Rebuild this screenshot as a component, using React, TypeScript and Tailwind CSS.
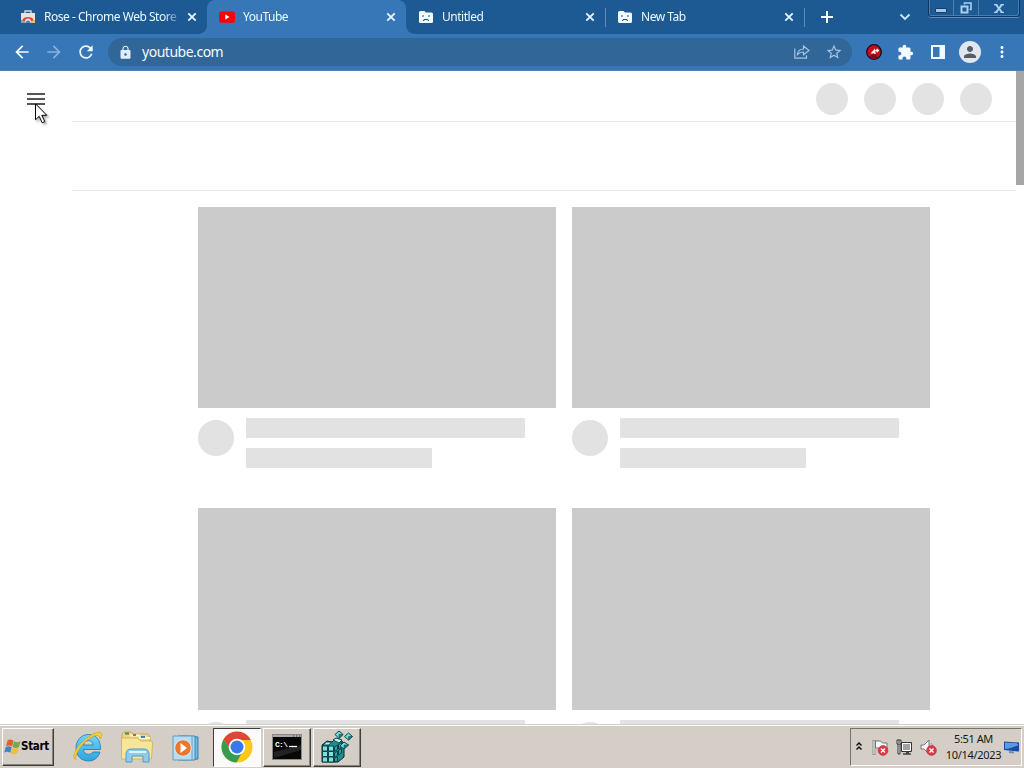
import type { ReactNode } from "react";
import clsx from "clsx";
import { MdArrowBack, MdArrowForward, MdExtension, MdLock, MdMoreVert, MdPerson, MdRefresh, MdStarBorder } from "react-icons/md";

function CloseIcon() {
  return (
    <svg width="10" height="10" viewBox="0 0 10 10" className="shrink-0">
      <path d="M1.3 1.3l7.4 7.4M8.7 1.3L1.3 8.7" stroke="#e9f8ff" strokeWidth="1.8" />
    </svg>
  );
}

function StoreIcon() {
  return (
    <svg width="16" height="16" viewBox="0 0 16 16">
      <path d="M5 4V2h6v2" fill="none" stroke="#c9dce6" strokeWidth="1.4" />
      <path d="M1 4h14v10H1z" fill="#e8e4dc" />
      <path d="M2 11.5a6.500 5.500 0 0 1 12 0l-3 1a3 3 0 0 0-6 0z" fill="#d9463a" />
      <path d="M1 10.5v3.500h4v-1.500z" fill="#7fae84" />
      <path d="M15 10.5v3.500h-4v-1.500z" fill="#e6c263" />
      <path d="M5.500 14a2.500 2.500 0 0 1 5 0z" fill="#557fb2" />
    </svg>
  );
}

function YouTubeIcon() {
  return (
    <svg width="16" height="16" viewBox="0 0 16 16">
      <rect x="0" y="2.5" width="16" height="11.2" rx="2" fill="#fa0505" />
      <path d="M6.3 5.6v5l4.2-2.5z" fill="#fff" />
    </svg>
  );
}

function SadFolderIcon() {
  return (
    <svg width="16" height="16" viewBox="0 0 16 16">
      <path d="M1 3.500Q1 2 2.500 2h4L8 3.500h5.500Q15 3.500 15 5v7.500q0 1.500-1.500 1.500h-11Q1 14 1 12.500z" fill="#f2fbff" />
      <path d="M4 7h2M10 7h2M5 11.500h1v-1h4v1h1" fill="none" stroke="#1f5488" strokeWidth="1" />
    </svg>
  );
}

function ShareIcon() {
  return (
    <svg width="16" height="16" viewBox="0 0 16 16" fill="none" stroke="#a4c4e6" strokeWidth="1.200">
      <path d="M.800 4.500v9.700h11.700v-3" />
      <path d="M3.500 10.500c.3-3.400 2.700-5.400 6-5.500V2l5.500 4.500-5.500 4.300V8c-2.500 0-4.500.7-6 2.500z" />
    </svg>
  );
}

const tabs: { title: string; icon: ReactNode; active?: boolean; divider?: boolean }[] = [
  { title: "Rose - Chrome Web Store", icon: <StoreIcon /> },
  { title: "YouTube", icon: <YouTubeIcon />, active: true },
  { title: "Untitled", icon: <SadFolderIcon />, divider: true },
  { title: "New Tab", icon: <SadFolderIcon />, divider: true },
];

function TabStrip() {
  return (
    <div className="flex h-[34px] bg-[#1d5993] pl-2">
      {tabs.map((tab) => (
        <div
          key={tab.title}
          className={clsx("relative flex w-[199px] shrink-0 items-center pl-3 pr-2.5", tab.active && "rounded-t-lg bg-[#3877b7]")}
        >
          {tab.active && (
            <>
              <span className="absolute bottom-0 -left-2 size-2 bg-[radial-gradient(circle_at_0_0,transparent_7.5px,#3877b7_8px)]" />
              <span className="absolute bottom-0 -right-2 size-2 bg-[radial-gradient(circle_at_100%_0,transparent_7.5px,#3877b7_8px)]" />
            </>
          )}
          {tab.icon}
          <span className="ml-2 mr-1 w-0 grow whitespace-nowrap text-[12px] leading-4 tracking-[-0.48px] text-[#edf8ff] [mask-image:linear-gradient(to_right,black_86%,transparent)]">
            {tab.title}
          </span>
          <CloseIcon />
          {tab.divider && <span className="absolute -right-px top-2 h-[19px] w-px bg-[#5b8cbc]" />}
        </div>
      ))}
      <svg width="12" height="12" viewBox="0 0 12 12" className="ml-[17px] mt-[11px]">
        <path d="M6 0v12M0 6h12" stroke="#f2fbff" strokeWidth="2" />
      </svg>
      <svg width="12" height="8" viewBox="0 0 12 8" className="ml-[66px] mt-[13px]">
        <path d="M1.500 1.500L6 6l4.500-4.500" fill="none" stroke="#c5ebfb" strokeWidth="1.800" />
      </svg>
      <WindowButtons />
    </div>
  );
}

function WindowButtons() {
  return (
    <div className="ml-auto mr-1 flex h-[17px] w-[92px] rounded-b-[3px] border border-t-0 border-[#0e3865] shadow-[0_1px_0_#5b8dbe,inset_1px_0_0_#457bad,inset_-1px_-1px_0_#457bad]">
      <div className="flex w-[25px] items-end justify-center border-r border-[#4e80b1] pb-[3px]">
        <span className="h-[5px] w-[12px] rounded-[1px] border border-[#153e6b] bg-[#a0c8ec]" />
      </div>
      <div className="flex w-[25px] items-center justify-center border-r border-[#4e80b1]">
        <svg width="12" height="12" viewBox="0 0 12 12" fill="none" stroke="#a9d0ef">
          <path d="M4.500 2.500V1h6.500v6.500H9.500" strokeWidth="1.600" />
          <path d="M1.500 4.500h6v6h-6z" strokeWidth="2" />
        </svg>
      </div>
      <div className="flex grow items-center justify-center">
        <svg width="10" height="9" viewBox="0 0 10 9">
          <path d="M1.500 0l7 9M8.500 0l-7 9" stroke="#a9d0ef" strokeWidth="2" />
          <path d="M0 .600h3.500M6.500.600H10M0 8.400h3.500M6.500 8.400H10" stroke="#a9d0ef" strokeWidth="1.200" />
        </svg>
      </div>
    </div>
  );
}

function Toolbar() {
  return (
    <div className="flex h-[37px] items-center border-b border-[#4f7fb0] bg-[#3877b7] pr-[13px] text-[#f2fbff]">
      <MdArrowBack className="ml-3 size-5" />
      <MdArrowForward className="ml-3 size-5 text-[#86b2df]" />
      <MdRefresh className="ml-3 size-5" />
      <div className="ml-3 flex h-7 w-[744px] items-center rounded-full bg-[#316698] pl-2.5 pr-[9px]">
        <MdLock className="size-[15px] text-[#e0efff]" />
        <span className="ml-[9px] text-[14px] leading-5 tracking-[-0.48px]">youtube.com</span>
        <div className="ml-auto flex items-center gap-[15px] text-[#a4c4e6]">
          <ShareIcon />
          <MdStarBorder className="size-[18px]" />
        </div>
      </div>
      <svg width="16" height="16" viewBox="0 0 16 16" className="ml-3.5">
        <circle cx="8" cy="8" r="7.300" fill="#c4101b" stroke="#1b0a17" strokeWidth="1.300" />
        <path d="M2.500 12.500a7 7 0 0 0 9.500.500L8.500 10z" fill="#7b0c19" />
        <path d="M5.500 9.500l3-3.500.500 4M7 8.500h2.500M9.500 6.500h3.500M11.300 4.800v3.500" fill="none" stroke="#fff" strokeWidth="1.300" />
      </svg>
      <MdExtension className="ml-[15px] size-[17px]" />
      <svg width="14" height="14" viewBox="0 0 14 14" className="ml-[17px]">
        <path d="M1 1h12v12H1z" fill="none" stroke="#effaff" strokeWidth="2" />
        <path d="M8.500 1H13v12H8.500z" fill="#effaff" />
      </svg>
      <div className="ml-3.5 flex size-[22px] items-center justify-center rounded-full bg-[#dfe6ee]">
        <MdPerson className="size-[18px] text-[#565b66]" />
      </div>
      <MdMoreVert className="ml-auto size-[18px]" />
    </div>
  );
}

function VideoSkeleton() {
  return (
    <div>
      <div className="h-[201.4px] bg-[#cbcbcb]" />
      <div className="flex pt-2.5">
        <div className="mr-3 mt-0.5 size-9 rounded-full bg-[#e2e2e2]" />
        <div className="flex flex-col gap-2.5">
          <div className="h-5 w-[279px] rounded-[1px] bg-[#e2e2e2]" />
          <div className="h-5 w-[186px] rounded-[1px] bg-[#e2e2e2]" />
        </div>
      </div>
    </div>
  );
}

function Page() {
  return (
    <main className="relative flex h-[653px] overflow-hidden bg-white">
      <div className="w-[72px] shrink-0 pl-[27px] pt-[22px]">
        <div className="flex w-[18px] flex-col gap-[3px]">
          <span className="h-0.5 bg-[#5b5256]" />
          <span className="h-0.5 bg-[#5b5256]" />
          <span className="h-0.5 bg-[#5b5256]" />
        </div>
      </div>
      <div className="w-[944px] shrink-0">
        <div className="flex h-[51px] items-center justify-end gap-4 border-b border-[#e6e6e6] pr-6 pt-[6px]">
          {[0, 1, 2, 3].map((i) => (
            <div key={i} className="size-8 rounded-full bg-[#e2e3e2]" />
          ))}
        </div>
        <div className="h-[69px] border-b border-[#e6e6e6]" />
        <div className="ml-[126px] mt-4 grid w-[732px] grid-cols-2 gap-x-4 gap-y-10">
          {[0, 1, 2, 3].map((i) => (
            <VideoSkeleton key={i} />
          ))}
        </div>
      </div>
      <div className="h-[114px] w-2 bg-[#a6a6a6]" />
      <svg width="14" height="22" viewBox="0 0 14 22" className="absolute left-[35px] top-[32px] drop-shadow-[2px_2px_1px_rgba(0,0,0,0.3)]">
        <path d="M.500.800v16l3.700-3.500 3 6.500 2.600-1.200-3-6.300h5z" fill="#fff" stroke="#000" />
      </svg>
    </main>
  );
}

function WindowsLogo() {
  return (
    <svg width="17" height="16" viewBox="0 0 17 16">
      <path d="M3.500 1.500q3-2 6 .300L8 7.500q-3-2-6 0z" fill="#e2602f" />
      <path d="M10 2.300q3 2 6.500 0L15 8q-3 2-6.500 0z" fill="#79a848" />
      <path d="M1.700 8.300q3-2 6 0l-1.500 5.500q-3-2-6 0z" fill="#3f83c4" />
      <path d="M8.200 8.800q3 2 6.500 0l-1.500 5.500q-3 2-6.500 0z" fill="#f2bd38" />
    </svg>
  );
}

function ExplorerIcon() {
  return (
    <svg width="34" height="34" viewBox="0 0 34 34">
      <defs>
        <linearGradient id="ie" x2="0" y2="1">
          <stop stopColor="#6fd4f7" />
          <stop offset="1" stopColor="#2fa5df" />
        </linearGradient>
      </defs>
      <path
        d="M29.500 19.500H12.500c.2 3 2.200 4.800 5 4.800 2 0 3.500-.800 4.500-2.300h7C27.200 27.800 23 31 17.500 31 10.300 31 5 25.800 5 18S10.300 4.500 17.500 4.500c7.500 0 12.500 5.500 12 15zM12.600 15h9.600c-.3-2.800-2-4.400-4.800-4.400s-4.500 1.700-4.800 4.400z"
        fill="url(#ie)"
        stroke="#1d78b8"
        strokeWidth=".8"
      />
      <path d="M5 29.500C1 29 2.500 22 8.500 15 15 7.500 25 .500 29.500 2.500c2 1 1.500 4-.5 6.500 0-2.700-1.500-4-4-3.500-5 1-12 6.500-16.500 13C5.500 23.500 4 27 5 29.500z" fill="#f7cd37" stroke="#c99c1d" strokeWidth=".6" />
    </svg>
  );
}

function FolderIcon() {
  return (
    <svg width="34" height="34" viewBox="0 0 34 34">
      <path d="M2 4l2-2h7l2 2h15l2 3v20H2z" fill="#ecd587" stroke="#c7ab5c" />
      <path d="M5 3.500h4" stroke="#3f8d52" strokeWidth="2" />
      <path d="M10 5.500h10M19 8h11" stroke="#fff7d2" strokeWidth="2" />
      <path d="M13 5h3" stroke="#b06d3b" strokeWidth="2" />
      <path d="M21 7h4" stroke="#3d7fb6" strokeWidth="2" />
      <path d="M1.500 8h16l3 3H32l.500 3-1 15h-30z" fill="#f6e699" stroke="#d5b761" />
      <path d="M6 32v-8q0-5 5-5h13q5 0 5 5v8h-6v-6H12v6z" fill="#90cbea" stroke="#4d9dcd" />
      <path d="M9 22h17" stroke="#d8f5ff" strokeWidth="2" />
    </svg>
  );
}

function PlayerIcon() {
  return (
    <svg width="28" height="28" viewBox="0 0 28 28">
      <path d="M10 2l16 1v22l-16 1z" fill="#70b7de" stroke="#3b80ae" />
      <path d="M6 2l17 0v24L6 26z" fill="#acd9ef" stroke="#4087b5" />
      <path d="M1 2h19v24H1z" fill="#b5dcf0" stroke="#649fc5" />
      <circle cx="11" cy="14" r="8.300" fill="#ec762b" stroke="#d8ecf5" />
      <path d="M8.500 9v10l6.500-5z" fill="#fff" />
    </svg>
  );
}

function ChromeIcon() {
  return (
    <svg width="32" height="32" viewBox="0 0 32 32">
      <circle cx="16" cy="16" r="15.500" fill="#fbc718" />
      <path d="M2.600 8.200A15.500 15.500 0 0 1 29.400 8.200L29.500 9H16l-6.200 10.500z" fill="#e0453a" />
      <path d="M2.600 8.200A15.500 15.500 0 0 0 15.500 31.500L22.200 19.600 16 23 9.900 19.500z" fill="#379c50" />
      <circle cx="16" cy="16" r="8.300" fill="#fff" />
      <circle cx="16" cy="16" r="6.500" fill="#3978e7" />
    </svg>
  );
}

function ConsoleIcon() {
  return (
    <svg width="30" height="26" viewBox="0 0 30 26">
      <path d="M.500.500h29v25H.500z" fill="#070707" stroke="#888" />
      <path d="M1 1h28v2H1z" fill="#aaa" />
      <path d="M21 2h7" stroke="#333" strokeDasharray="1 2" />
      <path d="M2 18L29 11v5L2 24z" fill="#222" />
      <text x="3" y="12.500" fill="#fff" fontFamily="Liberation Mono, monospace" fontSize="8" fontWeight="bold" textLength="13">
        C:\
      </text>
      <path d="M17 12.500h8" stroke="#fff" strokeWidth="1.300" />
    </svg>
  );
}

function RegistryIcon() {
  return (
    <svg width="34" height="34" viewBox="0 0 34 34" stroke="#0a4347" strokeWidth="1">
      <path d="M2 15l5-4 5 1 3-3 7 2 2 3v13l-6 5H2z" fill="#1d8f93" stroke="#06282b" />
      <path d="M2.500 16h5v5h-5zM8.500 16h5v5h-5zM2.500 21.500h5v5h-5zM8.500 21.500h5v5h-5zM2.500 27h5v5h-5zM8.500 27h5v5h-5z" fill="#7fe0dc" />
      <path d="M14.500 17l3-2v4.500l-3 2zM18.500 14.500l3-2V17l-3 2zM14.500 23l3-2v4.500l-3 2zM18.500 20.500l3-2V23l-3 2zM14.500 28.500l3-2V31l-3 1z" fill="#2ba3a6" />
      <path d="M3 15l3.500-3h5L9 15zM13 10l3-2 6 2-3 3z" fill="#b9f4ee" />
      <path d="M19 1l4 3.500-4 4-4-4zM28.500 3l4 3.500-4 3.500-4-3.500zM24 12l4.500 3-4.500 4-4-3z" fill="#79dcd8" />
      <path d="M19 4.500l4 0-4 4zM28.500 6.500h4l-4 3.500zM24 15h4.500L24 19z" fill="#178286" strokeWidth=".5" />
    </svg>
  );
}

function TaskButton({ active, children }: { active?: boolean; children: ReactNode }) {
  return (
    <div
      className={clsx(
        "flex h-[39px] w-12 items-center justify-center border pb-px pr-px",
        active
          ? "border-[#3f3d3b] border-b-white border-r-white bg-[#fafafa]"
          : "border-white border-b-[#403e3b] border-r-[#403e3b] shadow-[inset_-1px_-1px_0_#85817b]",
      )}
    >
      {children}
    </div>
  );
}

function ErrorBadge({ x, y }: { x: number; y: number }) {
  return (
    <>
      <circle cx={x} cy={y} r="4.900" fill="#d93a46" stroke="#c0323c" strokeWidth=".6" />
      <path d={`M${x - 2} ${y - 2}l4 4m0-4l-4 4`} stroke="#fff" strokeWidth="1.400" />
    </>
  );
}

function Tray() {
  return (
    <div className="ml-auto mr-0.5 flex h-[38px] w-[172px] items-center border border-[#77736e] border-b-white border-r-white pl-[5px]">
      <svg width="6" height="9" viewBox="0 0 6 9" className="mb-0.5" fill="none" stroke="#111" strokeWidth="1.500">
        <path d="M.500 3.500L3 1l2.500 2.500M.500 7.500L3 5l2.500 2.500" />
      </svg>
      <svg width="17" height="17" viewBox="0 0 17 17" className="ml-2.5">
        <path d="M2 1v15" stroke="#666" strokeWidth="2.600" />
        <path d="M2 1.500v14" stroke="#fff" strokeWidth="1.200" />
        <path d="M3.500 2h5l2 2h4.500v7H9L7 9H3.500z" fill="#f8f8f8" stroke="#666" strokeWidth=".9" />
        <ErrorBadge x={11} y={11.5} />
      </svg>
      <svg width="17" height="17" viewBox="0 0 17 17" className="ml-[7px]">
        <path d="M5.500 3.500h10v9h-10z" fill="#a0a3a2" stroke="#333" />
        <path d="M6.500 4.500h8v7h-8z" fill="none" stroke="#fff" />
        <path d="M7 15h8M10 13.500h3" stroke="#444" strokeWidth="1.300" />
        <path d="M1 1v4h4V1zM2 5v10h2V5" fill="#eee" stroke="#333" />
        <path d="M3 1v3" stroke="#333" />
      </svg>
      <svg width="17" height="17" viewBox="0 0 17 17" className="ml-[7px]">
        <path d="M1 6h3l5-5v14l-5-5H1z" fill="#f5f5f5" stroke="#777" />
        <path d="M11 4q2 2 2 5" fill="none" stroke="#999" />
        <ErrorBadge x={11.5} y={11.5} />
      </svg>
      <div className="ml-2 flex w-[57px] flex-col items-center whitespace-nowrap font-['Noto_Sans',sans-serif] text-[11px] leading-4 tracking-[-0.3px] text-[#161616]">
        <span className="tracking-[-0.4px]">5:51 AM</span>
        <span>10/14/2023</span>
      </div>
      <svg width="15" height="15" viewBox="0 0 15 15" className="ml-0.5 mt-px">
        <path d="M0 1.500l15 1v9L0 10z" fill="#174d9a" />
        <path d="M1 2.500l13 .8v2Q6 9 1 9z" fill="#5c9ade" />
        <path d="M5 11l5 .5v2l-5-.5z" fill="#6a8eb6" />
      </svg>
    </div>
  );
}

function Taskbar() {
  return (
    <footer className="flex h-11 border-t border-[#d5d0ca] bg-[#d4cec7] pt-[3px] shadow-[inset_0_1px_0_#fff]">
      <div className="ml-0.5 flex h-[38px] w-[52px] items-center border border-white border-b-[#403e3b] border-r-[#403e3b] pl-px shadow-[inset_-1px_-1px_0_#85817b]">
        <WindowsLogo />
        <span className="font-['DejaVu_Sans_Condensed','DejaVu_Sans',sans-serif] text-[11.5px] font-bold tracking-[-0.3px] text-black">Start</span>
      </div>
      <div className="ml-[17px] mt-0.5 flex items-start">
        <ExplorerIcon />
        <span className="ml-[15px]">
          <FolderIcon />
        </span>
        <span className="ml-[18px] mt-1">
          <PlayerIcon />
        </span>
      </div>
      <div className="ml-[13px] flex gap-0.5">
        <TaskButton active>
          <ChromeIcon />
        </TaskButton>
        <TaskButton>
          <ConsoleIcon />
        </TaskButton>
        <TaskButton>
          <RegistryIcon />
        </TaskButton>
      </div>
      <Tray />
    </footer>
  );
}

export default function App() {
  return (
    <div className="h-[768px] w-[1024px] overflow-hidden bg-white font-['Noto_Sans',sans-serif]">
      <TabStrip />
      <Toolbar />
      <Page />
      <Taskbar />
    </div>
  );
}
